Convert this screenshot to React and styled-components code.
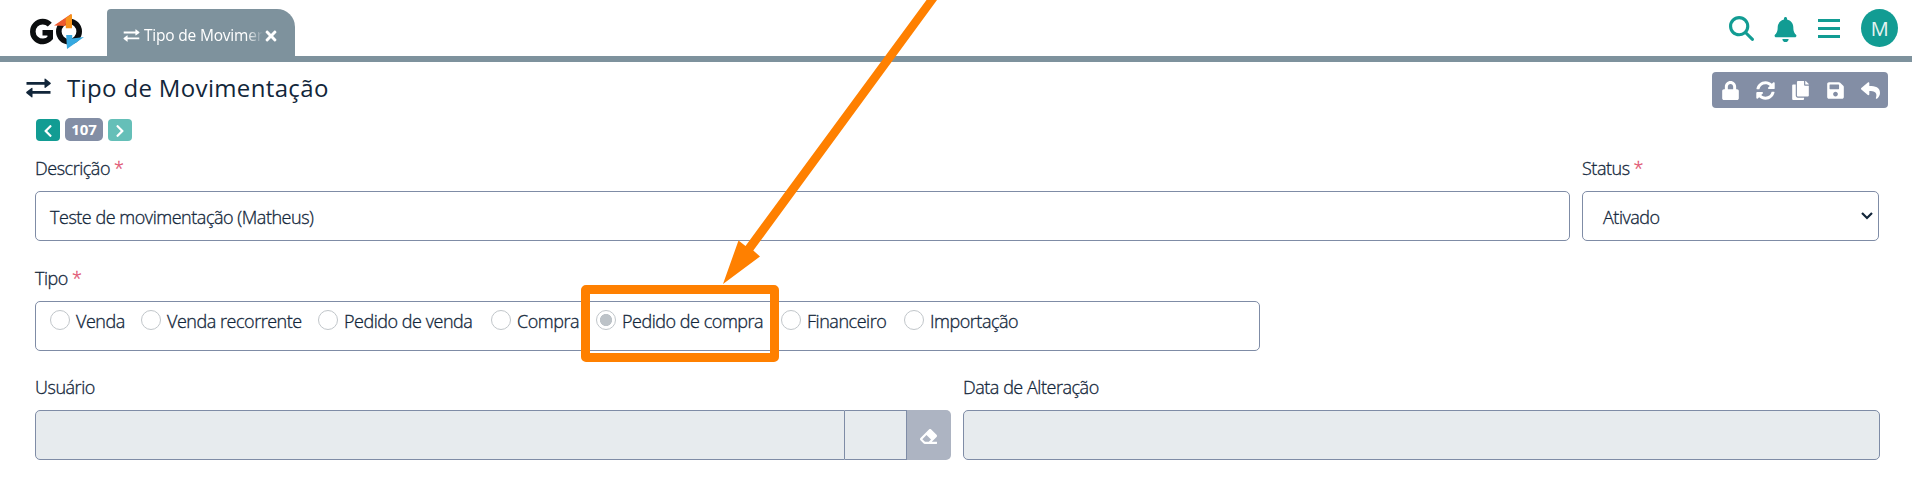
import React from "react";
import styled, { createGlobalStyle } from "styled-components";
import { FaBell, FaTimes, FaLock, FaReply, FaEraser, FaChevronLeft, FaChevronRight, FaSyncAlt, FaCopy, FaSave } from "react-icons/fa";
import { FaMagnifyingGlass } from "react-icons/fa6";

const GlobalStyle = createGlobalStyle`
  * { box-sizing: border-box; }
  body {
    margin: 0;
    background: #fff;
    color: #12263a;
    font-family: "Open Sans", "Noto Sans", sans-serif;
    font-size: 18px;
    font-weight: 300;
    letter-spacing: -0.47px;
  }
`;

const Page = styled.div`
  position: relative;
  width: 1912px;
  height: 497px;
  overflow: hidden;
  background: #fff;
`;

const TopBar = styled.header`
  display: flex;
  align-items: flex-end;
  height: 62px;
  border-bottom: 6px solid #7e929d;
  padding: 0 14px 0 29px;
`;

const Logo = styled.svg`
  width: 56px;
  height: 36px;
  margin: 0 22px 6px 0;
  flex: none;
`;

const Tab = styled.div`
  display: flex;
  align-items: center;
  width: 188px;
  height: 47px;
  padding: 6px 16px 0 16px;
  background: #7e929d;
  color: #fff;
  border-radius: 4px 18px 0 0;

  svg { flex: none; }
`;

const TabLabel = styled.span`
  width: 119px;
  margin: -2px 0 0 4px;
  overflow: hidden;
  white-space: nowrap;
  font-size: 15.5px;
  font-weight: 400;
  letter-spacing: -0.2px;
  line-height: 22px;
  mask-image: linear-gradient(to right, #000 86%, transparent 100%);
`;

const TopActions = styled.nav`
  display: flex;
  align-items: center;
  align-self: stretch;
  margin-left: auto;
  color: #129c93;
`;

const BellIcon = styled(FaBell)`
  width: 23px;
  height: 25px;
  margin: 2px 21px 0 20px;
`;

const Bars = styled.span`
  display: flex;
  flex-direction: column;
  justify-content: space-between;
  width: 22px;
  height: 19px;
  margin-top: 1px;
`;

const Bar = styled.i`
  height: 3px;
  background: currentColor;
`;

const Avatar = styled.div`
  display: flex;
  align-items: center;
  justify-content: center;
  width: 37px;
  height: 38px;
  margin-left: 21px;
  border-radius: 50%;
  background: #129c93;
  color: #e6f4f2;
  font-size: 20px;
  font-weight: 400;
`;

const TitleBar = styled.div`
  display: flex;
  align-items: flex-start;
  height: 56px;
  padding: 10px 24px 0 26px;
`;

const TitleIcon = styled.span`
  display: flex;
  padding-top: 6px;
`;

const Title = styled.h1`
  margin: -1px 0 0 16px;
  font-size: 24px;
  font-weight: 500;
  line-height: 34px;
  letter-spacing: 0.35px;
`;

const Toolbar = styled.div`
  display: flex;
  align-items: center;
  justify-content: space-between;
  width: 176px;
  height: 36px;
  margin-left: auto;
  padding: 0 8px 0 9px;
  border-radius: 4px;
  background: #838ea5;
  color: #fff;
`;

const Pager = styled.div`
  display: flex;
  align-items: flex-end;
  gap: 5px;
  height: 23px;
  margin-bottom: 16px;
  padding-left: 36px;
`;

const PagerButton = styled.button`
  display: flex;
  align-items: center;
  justify-content: center;
  width: 24px;
  height: 22px;
  padding: 1px 0 0;
  border: 0;
  border-radius: 4px;
  background: ${(p) => (p.$muted ? "#65bfb8" : "#129c93")};
  color: #fff;
`;

const PagerCount = styled.span`
  width: 38px;
  height: 23px;
  border-radius: 5px;
  background: #838ea5;
  color: #fff;
  font-size: 15px;
  font-weight: 700;
  letter-spacing: 0;
  line-height: 23px;
  text-align: center;
`;

const Form = styled.form`
  -webkit-text-stroke: 0.3px currentColor;
`;

const FormRow = styled.div`
  display: flex;
  gap: 12px;
  padding: 0 0 0 35px;
  height: ${(p) => p.$h}px;
`;

const Field = styled.div`
  width: ${(p) => p.$w}px;
`;

const Label = styled.label`
  display: block;
  height: 34px;
  line-height: 23px;
`;

const Required = styled.span`
  margin-left: 4px;
  color: #e0526f;
`;

const Control = styled.div`
  display: flex;
  align-items: center;
  height: 50px;
  padding: 2px 5px 0 ${(p) => p.$indent || 14}px;
  border: 1px solid #7f8ca6;
  border-radius: 5px;
  background: ${(p) => (p.$disabled ? "#e7ebee" : "#fff")};
`;

const Caret = styled.svg`
  width: 12px;
  height: 8px;
  margin: -2px 0 0 auto;
`;

const RadioGroup = styled(Control)`
  align-items: flex-start;
  padding: 7px 0 0 14px;
`;

const RadioOption = styled.div`
  display: flex;
  flex: none;
  width: ${(p) => p.$w}px;
  line-height: 25px;
  white-space: nowrap;
`;

const RadioDot = styled.span`
  flex: none;
  width: 20px;
  height: 20px;
  margin: 1px 6px 0 0;
  border: 1px solid #c1c6ca;
  border-radius: 50%;
  background: ${(p) => (p.$checked ? "radial-gradient(circle, #bdc3c8 5.7px, #fff 6.4px)" : "#fff")};
`;

const Lookup = styled.div`
  display: flex;
  height: 50px;
`;

const LookupMain = styled(Control)`
  width: 810px;
  border-radius: 5px 0 0 5px;
`;

const LookupCode = styled(Control)`
  width: 62px;
  border-width: 1px 1px 1px 0;
  border-radius: 0;
`;

const ClearButton = styled.button`
  display: flex;
  flex: 1;
  align-items: center;
  justify-content: center;
  padding: 2px 1px 0 0;
  border: 0;
  border-radius: 0 5px 5px 0;
  background: #adb4c2;
  color: #fff;
`;

const HighlightBox = styled.div`
  position: absolute;
  left: 581px;
  top: 285px;
  width: 198px;
  height: 77px;
  border: 9px solid #ff8000;
  border-radius: 5px;
`;

const Arrow = styled.svg`
  position: absolute;
  left: 720px;
  top: 0;
  width: 220px;
  height: 290px;
`;

const Exchange = ({ width, height }) => (
  <svg width={width} height={height} viewBox="0 0 25 20" fill="currentColor">
    <path d="M.5 4H18.5V1.3Q18.5 0 19.5 .8L24.5 4.7Q25.2 5.4 24.5 6.1L19.5 9.8Q18.5 10.5 18.5 9.3V6.8H.5ZM24.5 13H6.5V10.5Q6.5 9.2 5.5 10L.5 13.8Q-.2 14.5 .5 15.2L5.5 19.2Q6.5 20 6.5 18.7V15.8H24.5Z" />
  </svg>
);

const BrandMark = () => (
  <Logo viewBox="0 0 56 36">
    <g fill="none" stroke="#0b0d0e" strokeWidth="5.6">
      <path d="M20.8 10.6A9.9 9.9 0 1 0 21.2 24V18.8H13.5" />
      <circle cx="40" cy="17.5" r="10.2" />
    </g>
    <path d="M25 11.5L42 0V6.5L37 9L36.5 12Z" fill="#ee5a2f" />
    <path d="M36.8 4L43 0V14.5H36.8Z" fill="#f7941d" />
    <path d="M36 14.5H43.5V21H36Z" fill="#fff" />
    <path d="M37.2 21H43.2V24.5L55 23L38 35Z" fill="#36a9e1" />
  </Logo>
);

const options = [
  { text: "Venda", w: 91 },
  { text: "Venda recorrente", w: 177 },
  { text: "Pedido de venda", w: 173 },
  { text: "Compra", w: 105 },
  { text: "Pedido de compra", w: 185, checked: true },
  { text: "Financeiro", w: 123 },
  { text: "Importação", w: 130 },
];

export default function App() {
  return (
    <Page>
      <GlobalStyle />
      <TopBar>
        <BrandMark />
        <Tab>
          <Exchange width={17} height={13} />
          <TabLabel>Tipo de Movimentação</TabLabel>
          <FaTimes size={16} />
        </Tab>
        <TopActions>
          <FaMagnifyingGlass size={25} />
          <BellIcon />
          <Bars><Bar /><Bar /><Bar /></Bars>
          <Avatar>M</Avatar>
        </TopActions>
      </TopBar>
      <TitleBar>
        <TitleIcon><Exchange width={25} height={20} /></TitleIcon>
        <Title>Tipo de Movimentação</Title>
        <Toolbar>
          <FaLock size={19} />
          <FaSyncAlt size={19} />
          <FaCopy size={19} />
          <FaSave size={19} />
          <FaReply size={19} />
        </Toolbar>
      </TitleBar>
      <Pager>
        <PagerButton><FaChevronLeft size={14} /></PagerButton>
        <PagerCount>107</PagerCount>
        <PagerButton $muted><FaChevronRight size={14} /></PagerButton>
      </Pager>
      <Form>
        <FormRow $h={110}>
          <Field $w={1535}>
            <Label>Descrição<Required>*</Required></Label>
            <Control>Teste de movimentação (Matheus)</Control>
          </Field>
          <Field $w={297}>
            <Label>Status<Required>*</Required></Label>
            <Control $indent={20}>
              Ativado
              <Caret viewBox="0 0 12 8"><path d="M1 1L6 6L11 1" fill="none" stroke="#12263a" strokeWidth="2.2" /></Caret>
            </Control>
          </Field>
        </FormRow>
        <FormRow $h={109}>
          <Field $w={1225}>
            <Label>Tipo<Required>*</Required></Label>
            <RadioGroup>
              {options.map((o) => (
                <RadioOption key={o.text} $w={o.w}><RadioDot $checked={o.checked} />{o.text}</RadioOption>
              ))}
            </RadioGroup>
          </Field>
        </FormRow>
        <FormRow $h={90}>
          <Field $w={916}>
            <Label>Usuário</Label>
            <Lookup>
              <LookupMain $disabled />
              <LookupCode $disabled />
              <ClearButton type="button"><FaEraser size={17} /></ClearButton>
            </Lookup>
          </Field>
          <Field $w={917}>
            <Label>Data de Alteração</Label>
            <Control $disabled />
          </Field>
        </FormRow>
      </Form>
      <HighlightBox />
      <Arrow viewBox="720 0 220 290" fill="#ff8000">
        <path d="M926.5 0H937L753.3 250.5L760 256.5L723 284L738.5 240.5L745.5 246Z" />
      </Arrow>
    </Page>
  );
}
